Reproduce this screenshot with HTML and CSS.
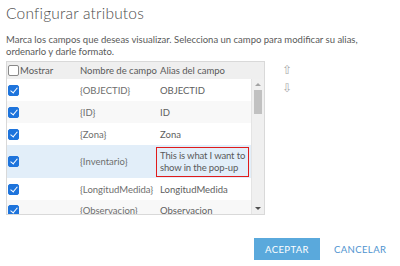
FILE: index.html
```html
<!DOCTYPE html>
<html lang="es">
<head>
    <meta charset="UTF-8">
    <title>Configurar atributos</title>
    <link rel="stylesheet" href="styles.css">
</head>
<body>
    <div class="dialog">
        <h2>Configurar atributos</h2>
        <p class="intro">Marca los campos que deseas visualizar. Selecciona un campo para modificar su alias, ordenarlo y darle formato.</p>

        <div class="main">
            <!-- Tabla de campos -->
            <div class="grid">
                <div class="row head">
                    <div class="c-show"><span class="box"></span>Mostrar</div>
                    <div class="c-name">Nombre de campo</div>
                    <div class="c-alias">Alias del campo</div>
                    <div class="c-bar"></div>
                </div>
                <div class="body">
                    <div class="rows">
                        <div class="row">
                            <div class="c-show"><span class="box on"></span></div>
                            <div class="c-name">{OBJECTID}</div>
                            <div class="c-alias">OBJECTID</div>
                        </div>
                        <div class="row alt">
                            <div class="c-show"><span class="box on"></span></div>
                            <div class="c-name">{ID}</div>
                            <div class="c-alias">ID</div>
                        </div>
                        <div class="row">
                            <div class="c-show"><span class="box on"></span></div>
                            <div class="c-name">{Zona}</div>
                            <div class="c-alias">Zona</div>
                        </div>
                        <div class="row sel">
                            <div class="c-show"><span class="box on"></span></div>
                            <div class="c-name">{Inventario}</div>
                            <div class="c-alias"><span class="mark">This is what I want to<br>show in the pop-up</span></div>
                        </div>
                        <div class="row">
                            <div class="c-show"><span class="box on"></span></div>
                            <div class="c-name">{LongitudMedida}</div>
                            <div class="c-alias">LongitudMedida</div>
                        </div>
                        <div class="row alt last">
                            <div class="c-show"><span class="box on"></span></div>
                            <div class="c-name">{Observacion}</div>
                            <div class="c-alias">Observacion</div>
                        </div>
                    </div>
                    <div class="scroll">
                        <span class="arrow up"></span>
                        <span class="thumb"></span>
                        <span class="arrow down"></span>
                    </div>
                </div>
            </div>

            <!-- Ordenar -->
            <div class="order">
                <span>&#8679;</span>
                <span>&#8681;</span>
            </div>
        </div>

        <div class="actions">
            <button class="btn primary">ACEPTAR</button>
            <button class="btn link">CANCELAR</button>
        </div>
    </div>
</body>
</html>
```

FILE: styles.css
```css
/* Dialogo de atributos */
body {
    margin: 0;
    background: #fff;
    font-family: Lato, "Open Sans", sans-serif;
    color: #4c4c4c;
}

.dialog {
    width: 400px;
    height: 266px;
    padding: 3px 6px 0 6px;
    box-sizing: border-box;
}

h2 {
    margin: 0;
    font-size: 15.5px;
    font-weight: 300;
    color: #4c4c4c;
    line-height: 20px;
    letter-spacing: 0.2px;
}

.intro {
    margin: 11px 0 0 0;
    font-size: 9.5px;
    line-height: 12px;
    color: #595959;
}

.main {
    display: flex;
    margin-top: 3px;
}

.grid {
    width: 259px;
    height: 154px;
    border: 1px solid #d9d9d9;
    box-sizing: border-box;
    overflow: hidden;
    font-size: 9.5px;
}

.row {
    display: flex;
    align-items: center;
    height: 22px;
    background: #fff;
}

.row.alt {
    background: #f8f8f8;
}

.row.sel {
    height: 33px;
    background: #e2eef9;
}

.row.last {
    align-items: flex-start;
    padding-top: 5px;
    box-sizing: border-box;
}

.head {
    height: 17px;
    background: #efefef;
    color: #595959;
}

.c-show {
    width: 73px;
    display: flex;
    align-items: center;
    flex-shrink: 0;
}

.c-name {
    width: 80px;
    flex-shrink: 0;
    color: #6e6e6e;
}

.c-alias {
    flex: 1;
    color: #5e5e5e;
}

.head .c-name,
.head .c-alias {
    color: #595959;
}

.c-bar {
    width: 12px;
}

.box {
    width: 9px;
    height: 9px;
    border: 1px solid #888;
    border-radius: 2px;
    background: #fff;
    margin: 0 1px 0 1px;
}

.box.on {
    border-color: #1e74dc;
    background: #1e74dc;
    position: relative;
}

.box.on::after {
    content: "";
    position: absolute;
    left: 3px;
    top: 0px;
    width: 3px;
    height: 6px;
    border: solid #fff;
    border-width: 0 1.5px 1.5px 0;
    transform: rotate(40deg);
}

.body {
    display: flex;
    height: 135px;
}

.rows {
    flex: 1;
}

.mark {
    display: inline-block;
    border: 1.5px solid #e01b1b;
    padding: 2px 3px;
    line-height: 12px;
    margin-left: -4px;
    white-space: nowrap;
    letter-spacing: -0.15px;
    color: #595959;
}

.scroll {
    width: 12px;
    background: #f0f0f0;
    display: flex;
    flex-direction: column;
    align-items: center;
    border-left: 1px solid #e4e4e4;
}

.arrow {
    width: 0;
    height: 0;
    border-left: 3px solid transparent;
    border-right: 3px solid transparent;
    margin: 4px 0;
}

.arrow.up {
    border-bottom: 3px solid #a3a3a3;
}

.arrow.down {
    border-top: 3px solid #505050;
    margin-top: auto;
}

.thumb {
    width: 8px;
    height: 24px;
    background: #c1c1c1;
}

.order {
    display: flex;
    flex-direction: column;
    margin-left: 17px;
    margin-top: 2px;
    gap: 4px;
    font-size: 12px;
    color: #a8a8a8;
    line-height: 14px;
}

.actions {
    display: flex;
    justify-content: flex-end;
    align-items: center;
    gap: 14px;
    margin-top: 23px;
    padding-right: 10px;
}

.btn {
    font-family: Lato, sans-serif;
    font-size: 9.5px;
    letter-spacing: 0.4px;
    border: none;
    height: 22px;
    padding: 0;
    cursor: pointer;
}

.btn.primary {
    background: #5aa9dc;
    color: #fff;
    width: 66px;
}

.btn.link {
    background: none;
    color: #4f93cf;
    width: 50px;
}
```
